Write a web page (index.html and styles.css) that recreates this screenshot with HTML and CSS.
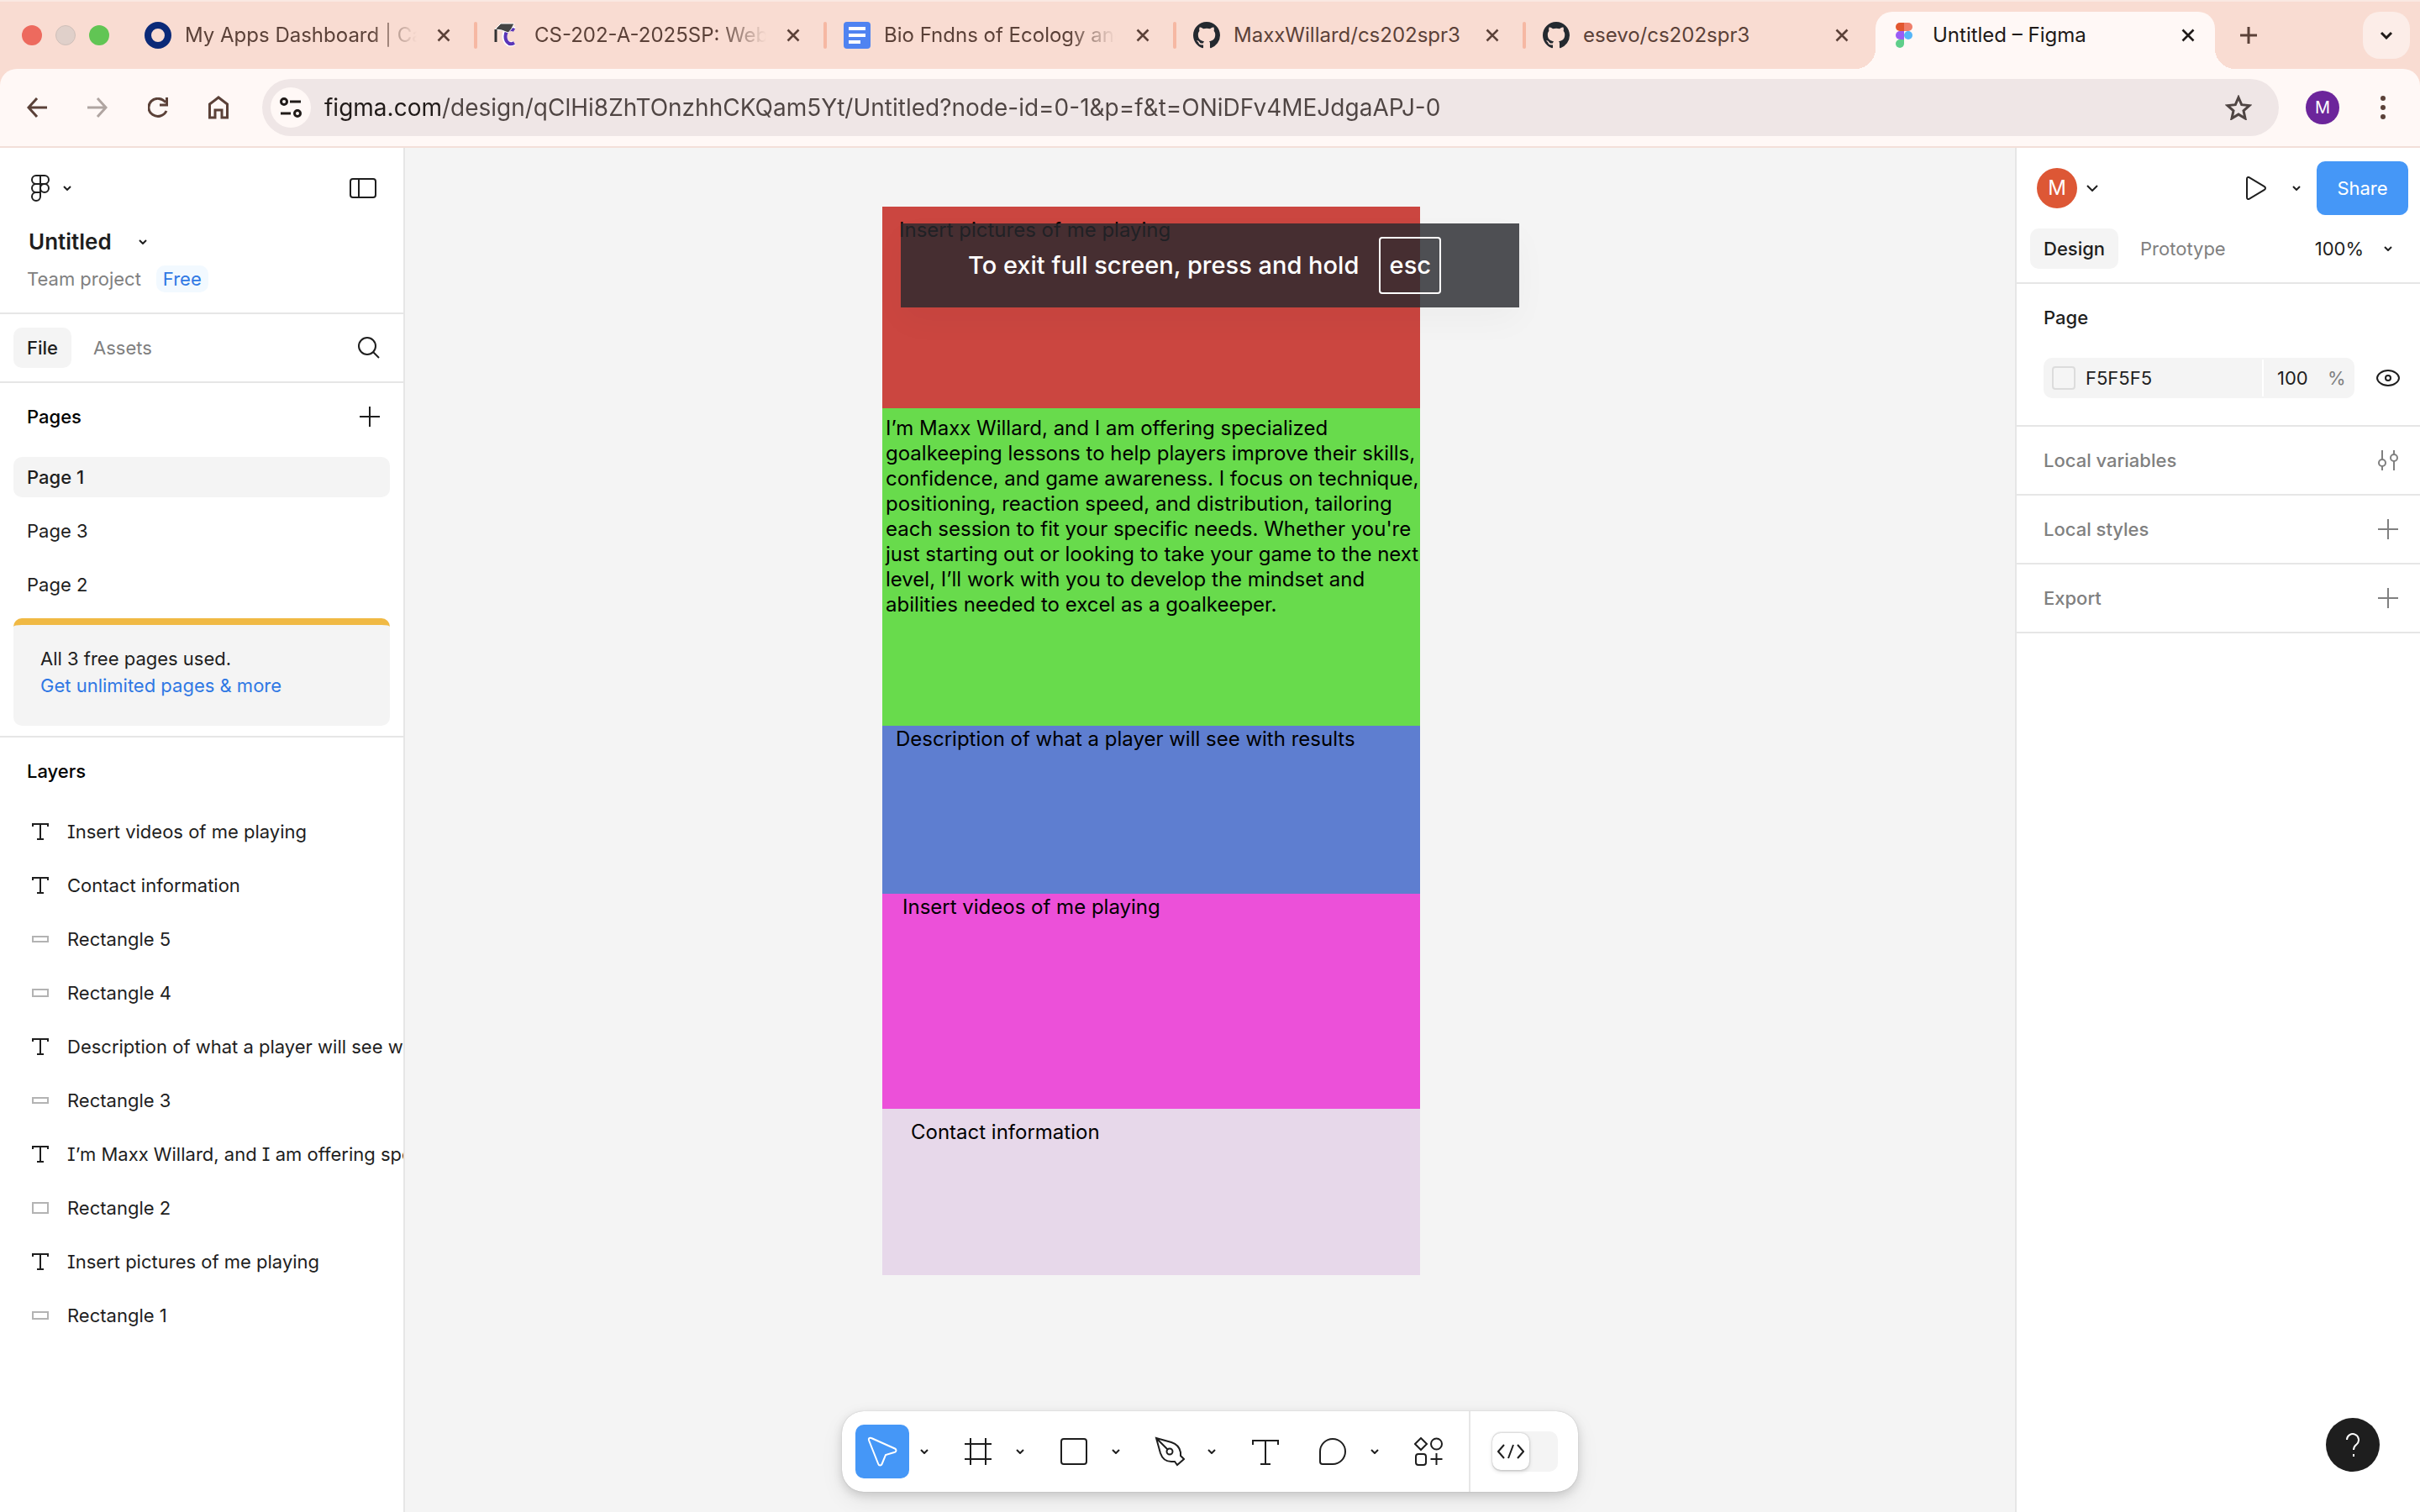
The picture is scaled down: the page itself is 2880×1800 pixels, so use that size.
FILE: index.html
```html
<!DOCTYPE html>
<html lang="en">
<head>
<meta charset="utf-8">
<title>Untitled – Figma</title>
<link rel="stylesheet" href="styles.css">
</head>
<body>
<svg class="sprite" aria-hidden="true">
  <symbol id="close" viewBox="0 0 16 16"><path d="M1.500 1.500l13 13M14.500 1.500l-13 13" stroke-width="2.600"/></symbol>
  <symbol id="chevron" viewBox="0 0 10 6"><path d="M1 1l4 4 4-4" stroke-width="2"/></symbol>
  <symbol id="plus" viewBox="0 0 24 24"><path d="M12 0v24M0 12h24" stroke-width="2"/></symbol>
  <symbol id="github" viewBox="0 0 16 16"><path stroke="none" fill="#24292f" d="M8 0C3.580 0 0 3.580 0 8c0 3.540 2.290 6.530 5.470 7.590.4.070.55-.17.55-.38 0-.19-.01-.82-.01-1.490-2.010.37-2.530-.49-2.690-.94-.09-.23-.48-.94-.82-1.130-.28-.15-.68-.52-.01-.53.63-.01 1.080.58 1.230.82.72 1.210 1.870.87 2.330.66.070-.52.28-.87.51-1.070-1.780-.2-3.640-.89-3.640-3.950 0-.87.31-1.590.82-2.150-.08-.2-.36-1.020.08-2.120 0 0 .67-.21 2.200.82.64-.18 1.320-.27 2-.27.68 0 1.360.09 2 .27 1.530-1.040 2.200-.82 2.200-.82.44 1.100.16 1.920.08 2.120.51.56.82 1.270.82 2.150 0 3.070-1.870 3.750-3.650 3.950.29.25.54.73.54 1.480 0 1.070-.01 1.930-.01 2.200 0 .21.15.46.55.38A8.013 8.013 0 0016 8c0-4.420-3.580-8-8-8z"/></symbol>
  <symbol id="text" viewBox="0 0 20 20"><path d="M1 4V1h18v3M10 1v18M6 19h8" stroke-width="2"/></symbol>
</svg>

<header class="browser">
  <div class="tabstrip">
    <div class="lights"><span class="light red"></span><span class="light grey"></span><span class="light green"></span></div>
    <nav class="tabs" aria-label="Tabs">
      <div class="tab">
        <svg class="favicon" viewBox="0 0 32 32"><circle cx="16" cy="16" r="12" stroke="#0b2a78" stroke-width="8"/></svg>
        <a class="tab-title faded" href="#">My Apps Dashboard | Ca</a>
        <button class="tab-close" aria-label="Close tab"><svg class="i16"><use href="#close"/></svg></button>
      </div>
      <div class="tab">
        <svg class="favicon" viewBox="0 0 32 32"><path d="M24 9c-3-2-9-1-11 5-2 8 4 16 11 11" stroke="#fff" stroke-width="6"/><path d="M24 10c-3-2-8-1-10 4-2 8 3 15 10 11" stroke="#5a35b8" stroke-width="4"/><path d="M2 8l6-6 16 0-3 6-4 5-8-3-7-1z" fill="#454545" stroke="#fff" stroke-width="1"/><path d="M2 9v15" stroke="#333" stroke-width="3"/></svg>
        <a class="tab-title faded" href="#">CS-202-A-2025SP: Web</a>
        <button class="tab-close" aria-label="Close tab"><svg class="i16"><use href="#close"/></svg></button>
      </div>
      <div class="tab">
        <svg class="favicon" viewBox="0 0 32 32"><rect width="32" height="32" rx="4" fill="#4f83f1" stroke="none"/><path d="M6 8h20M6 16h20M6 24h14" stroke="#fff" stroke-width="4"/></svg>
        <a class="tab-title faded" href="#">Bio Fndns of Ecology and</a>
        <button class="tab-close" aria-label="Close tab"><svg class="i16"><use href="#close"/></svg></button>
      </div>
      <div class="tab">
        <svg class="favicon"><use href="#github"/></svg>
        <a class="tab-title" href="#">MaxxWillard/cs202spr3</a>
        <button class="tab-close" aria-label="Close tab"><svg class="i16"><use href="#close"/></svg></button>
      </div>
      <div class="tab before-active">
        <svg class="favicon"><use href="#github"/></svg>
        <a class="tab-title" href="#">esevo/cs202spr3</a>
        <button class="tab-close" aria-label="Close tab"><svg class="i16"><use href="#close"/></svg></button>
      </div>
      <div class="tab active">
        <svg class="favicon" viewBox="0 0 32 32"><g stroke="none"><path d="M9 1h5v10H9a5 5 0 0 1 0-10z" fill="#e2572f"/><path d="M14 1h5a5 5 0 0 1 0 10h-5z" fill="#ef7e6a"/><path d="M9 11h5v10H9a5 5 0 0 1 0-10z" fill="#9a5cf5"/><circle cx="19" cy="16" r="5" fill="#55b5f8"/><path d="M9 21h5v5a5 5 0 1 1-5-5z" fill="#5fce8a"/></g></svg>
        <a class="tab-title" href="#">Untitled – Figma</a>
        <button class="tab-close" aria-label="Close tab"><svg class="i16"><use href="#close"/></svg></button>
      </div>
    </nav>
    <button class="new-tab" aria-label="New tab"><svg width="20" height="20" viewBox="0 0 20 20"><path d="M10 0v20M0 10h20" stroke-width="3"/></svg></button>
    <button class="tab-search" aria-label="Search tabs"><svg width="16" height="10" viewBox="0 0 16 10"><path d="M2 2l6 6 6-6" stroke-width="3"/></svg></button>
  </div>
  <div class="navbar">
    <button class="nav-btn" aria-label="Back"><svg width="24" height="24" viewBox="0 0 24 24"><path d="M24 12H2M12 1L2 12l10 11" stroke-width="3"/></svg></button>
    <button class="nav-btn dim" aria-label="Forward"><svg width="24" height="24" viewBox="0 0 24 24"><path d="M0 12h22M12 1l10 11-10 11" stroke-width="3"/></svg></button>
    <button class="nav-btn" aria-label="Reload"><svg width="24" height="24" viewBox="0 0 24 24"><path d="M21 6a11 10.500 0 1 0 1 10M22.500 0v9H14" stroke-width="3"/></svg></button>
    <button class="nav-btn" aria-label="Home"><svg width="24" height="28" viewBox="0 0 24 28"><path d="M1.500 10L12 2l10.500 8v16H16v-9H8v9H1.500z" stroke-width="3"/></svg></button>
    <div class="address">
      <button class="site-info" aria-label="Site information"><svg width="26" height="24" viewBox="0 0 26 24"><path d="M12 5h13M1 19h12" stroke-width="3"/><circle cx="5" cy="5" r="3.500" stroke-width="3"/><circle cx="21" cy="19" r="3.500" stroke-width="3"/></svg></button>
      <input class="url" type="text" aria-label="Address" value="figma.com/design/qClHi8ZhTOnzhhCKQam5Yt/Untitled?node-id=0-1&amp;p=f&amp;t=ONiDFv4MEJdgaAPJ-0">
      <button class="star" aria-label="Bookmark"><svg width="32" height="30" viewBox="0 0 32 30"><path d="M16 3l3.700 8.700 9.300.9-7 6.200 2 9.200-8-4.900L8 28l2-9.200-7-6.200 9.300-.9z" stroke-width="3"/></svg></button>
    </div>
    <button class="profile" aria-label="Profile">M</button>
    <button class="menu" aria-label="Menu"><svg width="8" height="28" viewBox="0 0 8 28"><g fill="currentColor" stroke="none"><circle cx="4" cy="3" r="3"/><circle cx="4" cy="14" r="3"/><circle cx="4" cy="25" r="3"/></g></svg></button>
  </div>
</header>

<main class="editor">
  <aside class="panel left">
    <section class="file-head">
      <div class="row logo-row">
        <button class="figma-menu" aria-label="Main menu"><svg width="22" height="32" viewBox="0 0 22 32"><path d="M11 1H6a5 5 0 0 0 0 10h5zM11 1h5a5 5 0 0 1 0 10h-5zM11 11H6a5 5 0 0 0 0 10h5zM11 21H6a5 5 0 1 0 5 5z" stroke-width="2"/><circle cx="16" cy="16" r="5" stroke-width="2"/></svg><svg class="chev"><use href="#chevron"/></svg></button>
        <button aria-label="Toggle panels"><svg width="32" height="24" viewBox="0 0 32 24"><rect x="1" y="1" width="30" height="22" rx="3" stroke-width="2"/><path d="M11 1v22" stroke-width="2"/></svg></button>
      </div>
      <button class="file-name">Untitled<svg class="chev"><use href="#chevron"/></svg></button>
      <div class="project"><a class="muted" href="#">Team project</a><span class="badge">Free</span></div>
    </section>
    <section class="panel-tabs">
      <button class="pill selected">File</button>
      <button class="pill">Assets</button>
      <button class="push" aria-label="Search"><svg width="26" height="26" viewBox="0 0 26 26"><circle cx="11" cy="11" r="10" stroke-width="2"/><path d="M18 18l7 7" stroke-width="2"/></svg></button>
    </section>
    <section class="pages">
      <div class="section-title"><h2>Pages</h2><button aria-label="Add page"><svg class="i24"><use href="#plus"/></svg></button></div>
      <ul class="page-list">
        <li><button class="page current">Page 1</button></li>
        <li><button class="page">Page 3</button></li>
        <li><button class="page">Page 2</button></li>
      </ul>
      <div class="upsell"><p>All 3 free pages used.</p><a href="#">Get unlimited pages &amp; more</a></div>
    </section>
    <section class="layers">
      <div class="section-title"><h2>Layers</h2></div>
      <ul>
        <li><button class="layer"><svg class="i20"><use href="#text"/></svg>Insert videos of me playing</button></li>
        <li><button class="layer"><svg class="i20"><use href="#text"/></svg>Contact information</button></li>
        <li><button class="layer"><span class="shape thin"></span>Rectangle 5</button></li>
        <li><button class="layer"><span class="shape"></span>Rectangle 4</button></li>
        <li><button class="layer"><svg class="i20"><use href="#text"/></svg>Description of what a player will see with results</button></li>
        <li><button class="layer"><span class="shape thin"></span>Rectangle 3</button></li>
        <li><button class="layer"><svg class="i20"><use href="#text"/></svg>I’m Maxx Willard, and I am offering specialized</button></li>
        <li><button class="layer"><span class="shape tall"></span>Rectangle 2</button></li>
        <li><button class="layer"><svg class="i20"><use href="#text"/></svg>Insert pictures of me playing</button></li>
        <li><button class="layer"><span class="shape"></span>Rectangle 1</button></li>
      </ul>
    </section>
  </aside>

  <div class="canvas">
    <div class="artboard">
      <div class="block pictures"><p>Insert pictures of me playing</p></div>
      <div class="block about"><p>I’m Maxx Willard, and I am offering specialized<br>goalkeeping lessons to help players improve their skills,<br>confidence, and game awareness. I focus on technique,<br>positioning, reaction speed, and distribution, tailoring<br>each session to fit your specific needs. Whether you're<br>just starting out or looking to take your game to the next<br>level, I’ll work with you to develop the mindset and<br>abilities needed to excel as a goalkeeper.</p></div>
      <div class="block results"><p>Description of what a player will see with results</p></div>
      <div class="block videos"><p>Insert videos of me playing</p></div>
      <div class="block contact"><p>Contact information</p></div>
    </div>
    <div class="toast" role="status">To exit full screen, press and hold<kbd>esc</kbd></div>
    <div class="toolbar" role="toolbar" aria-label="Tools">
      <div class="tools">
        <div class="tool-group"><button class="tool on" aria-label="Move"><svg width="36" height="36" viewBox="0 0 36 36"><path d="M2 4.500C1.300 2.500 3 1 5 2l28 12.500c2 1 2 3.500 0 4.300L22 22l-4.500 11c-.8 2-3.500 2-4.200 0z" stroke-width="2"/></svg></button><button class="more" aria-label="More move tools"><svg class="chev"><use href="#chevron"/></svg></button></div>
        <div class="tool-group"><button class="tool" aria-label="Frame"><svg width="32" height="32" viewBox="0 0 32 32"><path d="M7 0v32M25 0v32M0 7h32M0 25h32" stroke-width="2"/></svg></button><button class="more" aria-label="More frame tools"><svg class="chev"><use href="#chevron"/></svg></button></div>
        <div class="tool-group"><button class="tool" aria-label="Rectangle"><svg width="32" height="32" viewBox="0 0 32 32"><rect x="1" y="1" width="30" height="30" rx="3" stroke-width="2"/></svg></button><button class="more" aria-label="More shapes"><svg class="chev"><use href="#chevron"/></svg></button></div>
        <div class="tool-group"><button class="tool" aria-label="Pen"><svg width="36" height="36" viewBox="0 0 36 36"><path d="M2 2l18 5c6 2 10 6 11 12v4l4 4-8 7-3-4h-4c-7 0-11-4-13-10zM2 2l14 14" stroke-width="2"/><circle cx="18" cy="18" r="3.500" stroke-width="2"/></svg></button><button class="more" aria-label="More pen tools"><svg class="chev"><use href="#chevron"/></svg></button></div>
        <button class="tool" aria-label="Text"><svg width="32" height="32" viewBox="0 0 32 32"><path d="M1 8V3h30v5M16 3v28M10 31h12" stroke-width="2"/></svg></button>
        <div class="tool-group"><button class="tool" aria-label="Comment"><svg width="32" height="32" viewBox="0 0 32 32"><path d="M16 1a15 15 0 0 1 0 30H4a3 3 0 0 1-3-3V16A15 15 0 0 1 16 1z" stroke-width="2"/></svg></button><button class="more" aria-label="More comment tools"><svg class="chev"><use href="#chevron"/></svg></button></div>
        <button class="tool" aria-label="Actions"><svg width="34" height="34" viewBox="0 0 34 34"><g stroke-width="2"><path d="M8 1l7 7-7 7-7-7z"/><circle cx="26.500" cy="8" r="6.500"/><rect x="2" y="20" width="12" height="13" rx="3"/><path d="M26.500 19v14M19.500 26h14"/></g></svg></button>
      </div>
      <div class="dev"><button class="dev-toggle" role="switch" aria-checked="false" aria-label="Dev Mode"><span class="knob"><svg width="32" height="18" viewBox="0 0 32 18"><path d="M8 1L1 9l7 8M24 1l7 8-7 8M19 1l-6 16" stroke-width="2"/></svg></span></button></div>
    </div>
  </div>

  <aside class="panel right">
    <section class="share-head">
      <div class="row">
        <button class="account" aria-label="Account"><span class="avatar">M</span><svg width="14" height="8" viewBox="0 0 14 8"><path d="M1 1l6 6 6-6" stroke-width="2"/></svg></button>
        <div class="present">
          <button aria-label="Present"><svg width="24" height="28" viewBox="0 0 24 28"><path d="M1 3c0-1.800 1.500-2.500 3-1.700l17.500 10.500c2 1.200 2 3.200 0 4.400L4 26.700C2.500 27.500 1 26.800 1 25z" stroke-width="2"/></svg></button>
          <button aria-label="Present options"><svg class="chev"><use href="#chevron"/></svg></button>
          <button class="share">Share</button>
        </div>
      </div>
      <div class="row">
        <div class="modes"><button class="pill selected">Design</button><button class="pill">Prototype</button></div>
        <button class="zoom">100%<svg class="chev"><use href="#chevron"/></svg></button>
      </div>
    </section>
    <section class="page-props">
      <div class="section-title"><h2>Page</h2></div>
      <div class="fill">
        <div class="fill-field">
          <span class="swatch"></span>
          <input class="hex" type="text" aria-label="Page colour" value="F5F5F5">
          <input class="opacity" type="text" aria-label="Opacity" value="100"><span class="percent">%</span>
        </div>
        <button aria-label="Toggle visibility"><svg width="28" height="20" viewBox="0 0 28 20"><path d="M1 10c0-4 5.500-9 13-9s13 5 13 9-5.500 9-13 9-13-5-13-9z" stroke-width="2"/><circle cx="14" cy="10" r="3" stroke-width="2"/></svg></button>
      </div>
    </section>
    <section class="section-title prop"><h2>Local variables</h2><button aria-label="Open variables"><svg width="24" height="24" viewBox="0 0 24 24"><g stroke-width="2"><path d="M5 0v11M5 19v5M19 0v5M19 13v11"/><circle cx="5" cy="15" r="4"/><circle cx="19" cy="9" r="4"/></g></svg></button></section>
    <section class="section-title prop"><h2>Local styles</h2><button aria-label="Add style"><svg class="i24"><use href="#plus"/></svg></button></section>
    <section class="section-title prop"><h2>Export</h2><button aria-label="Add export"><svg class="i24"><use href="#plus"/></svg></button></section>
    <button class="help" aria-label="Help"><svg width="16" height="28" viewBox="0 0 16 28"><path d="M1 8a7 7 0 1 1 11.500 5.500C10 15.500 9 17 9 20" stroke-width="2"/><path d="M9 25v3" stroke-width="2"/></svg></button>
  </aside>
</main>
</body>
</html>
```
FILE: styles.css
```css
* { box-sizing: border-box; }
body {
  margin: 0;
  min-height: 100vh;
  display: flex;
  flex-direction: column;
  font-family: Inter, "Liberation Sans", sans-serif;
  font-size: 22px;
  line-height: 32px;
  color: #1e1e1e;
  background: #fff;
}
svg { display: block; flex: none; fill: none; stroke: currentColor; }
.sprite { position: absolute; width: 0; height: 0; }
button { padding: 0; border: 0; background: none; font: inherit; color: inherit; display: flex; align-items: center; justify-content: center; flex: none; }
input { min-width: 0; padding: 0; border: 0; background: none; font: inherit; color: inherit; outline: 0; }
a { color: inherit; text-decoration: none; }
h2, p, ul { margin: 0; padding: 0; }
ul { list-style: none; }
h2 { font-size: 22px; font-weight: 550; color: #000; }
.i16 { width: 16px; height: 16px; }
.i20 { width: 20px; height: 20px; }
.i24 { width: 24px; height: 24px; }
.chev { width: 10px; height: 6px; }

/* Browser window */
.browser { background: #f9dcd2; color: #5b4138; border-bottom: 2px solid #f3dfd9; }
.tabstrip { height: 82px; display: flex; align-items: center; border-top: 2px solid #fae8e2; }
.lights { width: 152px; padding-left: 26px; display: flex; gap: 16px; flex: none; }
.light { width: 24px; height: 24px; border-radius: 50%; }
.light.red { background: #ed6a5e; }
.light.grey { background: #e0d0ca; border: 1px solid #cfbfb9; }
.light.green { background: #61c554; }
.tabs { display: flex; flex: 0 1 2484px; align-self: stretch; }
.tab { flex: 1 1 416px; min-width: 0; display: flex; align-items: center; padding: 0 32px 0 20px; gap: 16px; position: relative; font-size: 24px; }
.tab:not(.before-active):not(.active)::after { content: ""; position: absolute; right: 0; top: 24px; width: 4px; height: 32px; border-radius: 2px; background: #f6b8a3; }
.favicon { width: 32px; height: 32px; }
.tab-title { flex: 1; min-width: 0; overflow: hidden; white-space: nowrap; }
.faded { -webkit-mask-image: linear-gradient(90deg, #000 calc(100% - 56px), transparent); mask-image: linear-gradient(90deg, #000 calc(100% - 56px), transparent); }
.tab-close { width: 16px; margin-left: 8px; }
.tab.active { flex: 0 0 404px; padding-right: 24px; margin-top: 12px; padding-bottom: 12px; border-radius: 20px 20px 0 0; background: #fff8f6; color: #201a18; }
.tab.active::before, .tab.active::after { content: ""; position: absolute; bottom: 0; width: 24px; height: 24px; }
.tab.active::before { left: -24px; background: radial-gradient(circle at 0 0, transparent 24px, #fff8f6 24px); }
.tab.active::after { right: -24px; background: radial-gradient(circle at 100% 0, transparent 24px, #fff8f6 24px); }
.new-tab { margin-left: 30px; }
.tab-search { width: 56px; height: 56px; margin: 0 12px 0 auto; border-radius: 20px; background: #fcede8; color: #201a18; }
.navbar { height: 92px; display: flex; align-items: center; padding: 0 40px 0 32px; border-radius: 20px 20px 0 0; background: #fff8f6; }
.nav-btn { width: 24px; margin-right: 48px; }
.nav-btn.dim { color: #b0a5a1; }
.nav-btn:nth-child(4) { margin-right: 40px; }
.address { flex: 1; height: 68px; border-radius: 34px; background: #efe6e6; display: flex; align-items: center; padding: 0 32px 0 10px; }
.site-info { width: 48px; height: 48px; border-radius: 50%; background: #fff8f6; color: #201a18; }
.url { flex: 1; margin: 0 16px; height: 40px; font-size: 28px; color: transparent; background: linear-gradient(90deg, #201a18 139px, #4f4543 139px); -webkit-background-clip: text; background-clip: text; }
.star { color: #4f4543; }
.profile { width: 40px; height: 40px; margin: 0 48px 0 32px; border-radius: 50%; background: #6c259b; color: #fff; font-size: 20px; }

/* Editor */
.editor { flex: 1; display: grid; grid-template-columns: 482px minmax(0, 1fr) 482px; }
.panel { background: #fff; }
.left { border-right: 2px solid #e6e6e6; overflow: hidden; min-width: 0; }
.right { border-left: 2px solid #e6e6e6; display: flex; flex-direction: column; }
.panel > section { border-bottom: 2px solid #e6e6e6; }
.panel > .layers { border-bottom: 0; }
.row { display: flex; align-items: center; justify-content: space-between; }
.muted { color: #808080; }
.file-head { padding: 24px 32px; }
.logo-row { height: 48px; margin-bottom: 24px; }
.figma-menu { gap: 16px; padding-left: 5px; }
.file-name { gap: 32px; padding-left: 2px; margin-bottom: 12px; font-size: 26px; font-weight: 600; }
.project { display: flex; gap: 18px; }
.badge { padding: 0 8px; border-radius: 10px; background: #f2f9ff; color: #2f78e4; }
.panel-tabs { display: flex; align-items: center; gap: 10px; padding: 16px; }
.push { margin-left: auto; margin-right: 12px; }
.pill { height: 48px; padding: 0 16px; border-radius: 10px; color: #808080; }
.selected { background: #f4f4f4; color: #1e1e1e; font-weight: 550; }
.section-title { height: 80px; display: flex; align-items: center; justify-content: space-between; padding: 0 28px 0 32px; }
.pages { padding-bottom: 12px; }
.page-list { display: flex; flex-direction: column; gap: 16px; padding: 8px 16px 16px; }
.page { width: 100%; height: 48px; padding-left: 16px; border-radius: 10px; justify-content: flex-start; }
.current { background: #f4f4f4; font-weight: 550; }
.upsell { height: 128px; margin: 0 16px; padding: 24px 32px; border-top: 8px solid #f0b944; border-radius: 10px; background: #f4f4f4; }
.upsell a { color: #2f78e4; }
.layer { width: 100%; height: 64px; padding-left: 38px; gap: 22px; justify-content: flex-start; white-space: nowrap; font-feature-settings: "cv08"; }
.upsell, .page, .layer { color: #1e1e1e; }
.shape { width: 20px; height: 10px; border: 2px solid #b3b3b3; flex: none; }
.thin { height: 8px; }
.tall { height: 14px; }

/* Canvas */
.canvas { position: relative; background: #f4f4f4; overflow: hidden; }
.artboard { position: absolute; left: 568px; top: 70px; width: 640px; font-size: 24px; line-height: 30px; color: #000; white-space: nowrap; }
.pictures { height: 240px; padding: 13px 20px; background: #cb4640; }
.about { height: 378px; padding: 9px 4px; background: #68db4c; }
.results { height: 200px; padding: 1px 16px; background: #5e7ed0; }
.videos { height: 256px; padding: 1px 24px; background: #ec50d9; }
.contact { height: 198px; padding: 13px 34px; background: #e7d8ea; }
.toast { position: absolute; left: 590px; top: 90px; width: 736px; height: 100px; padding-left: 80px; display: flex; align-items: center; gap: 24px; background: rgba(40, 41, 45, .81); color: #fff; font-size: 29px; font-weight: 500; white-space: nowrap; box-shadow: 0 16px 40px rgba(0, 0, 0, .03); }
.toast kbd { width: 74px; height: 68px; display: flex; align-items: center; justify-content: center; border: 2px solid #fff; border-radius: 4px; font: inherit; }
.toolbar { position: absolute; left: 50%; bottom: 24px; transform: translateX(-50%); display: flex; height: 96px; border-radius: 26px; background: #fff; box-shadow: 0 0 1px rgba(0, 0, 0, .3), 0 4px 12px rgba(0, 0, 0, .15), 0 10px 28px rgba(0, 0, 0, .07); }
.tools { display: flex; align-items: center; gap: 16px; padding: 0 16px; border-right: 2px solid #e6e6e6; }
.tool-group { display: flex; }
.tool { width: 64px; height: 64px; border-radius: 10px; }
.on { background: #4597f7; color: #fff; }
.more { width: 34px; padding-left: 2px; }
.dev { display: flex; align-items: center; padding: 0 24px 0 26px; }
.dev-toggle { width: 78px; height: 48px; border-radius: 10px; background: #f4f4f4; justify-content: flex-start; }
.knob { width: 44px; height: 44px; border-radius: 10px; background: #fff; display: flex; align-items: center; justify-content: center; box-shadow: 0 0 2px rgba(0, 0, 0, .25), 0 2px 5px rgba(0, 0, 0, .15); }

/* Properties panel */
.share-head { display: flex; flex-direction: column; gap: 16px; padding: 16px 14px 16px 16px; }
.account { gap: 11px; padding-left: 8px; }
.avatar { width: 48px; height: 48px; line-height: 48px; border-radius: 50%; background: #dd5735; color: #fff; font-size: 24px; }
.present { display: flex; align-items: center; }
.present button:nth-child(2) { margin: 0 19px 0 31px; }
.share { width: 109px; height: 64px; border-radius: 10px; background: #4597f7; color: #fff; }
.modes { display: flex; gap: 10px; }
.zoom { gap: 24px; margin-right: 19px; }
.right h2 { color: #1e1e1e; }
.fill { display: flex; align-items: center; justify-content: space-between; padding: 8px 24px 32px 32px; }
.fill-field { width: 370px; height: 48px; display: flex; align-items: center; border-radius: 10px; background: #f4f4f4; }
.swatch { width: 28px; height: 28px; margin: 0 12px 0 10px; border: 2px solid #dcdcdc; border-radius: 4px; background: #f5f5f5; flex: none; }
.hex { flex: 1; }
.opacity { width: 78px; height: 44px; padding-left: 16px; border-left: 2px solid #fff; }
.percent { width: 32px; color: #808080; }
.right .prop { height: 82px; padding-right: 26px; color: #808080; }
.right .prop h2 { color: #808080; }
.help { width: 64px; height: 64px; margin: auto 48px 48px auto; border-radius: 50%; background: #1e1e1e; color: #fff; }
```
